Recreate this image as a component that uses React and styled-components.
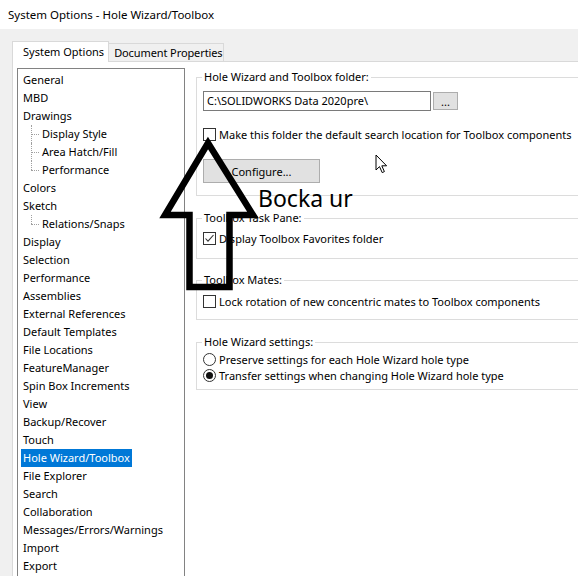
import React from 'react';
import styled, { createGlobalStyle } from 'styled-components';

const GlobalStyle = createGlobalStyle`
    html, body {
        margin: 0;
        padding: 0;
        overflow: hidden;
        background: #f0f0f0;
    }
    body {
        font-family: "Noto Sans", "Open Sans", sans-serif;
        font-size: 11px;
        color: #000000;
    }
`;

const Window = styled.div`
    position: relative;
    width: 578px;
    height: 576px;
    overflow: hidden;
    background: #f0f0f0;
    display: flex;
    flex-direction: column;
`;

const TitleBar = styled.div`
    height: 29px;
    flex: none;
    background: #ffffff;
    padding-left: 8px;
    line-height: 30px;
    font-size: 11.5px;
`;

const Body = styled.div`
    flex: 1;
    display: flex;
    flex-direction: column;
    padding: 12px 0 0 12px;
    min-height: 0;
`;

const TabStrip = styled.div`
    display: flex;
    align-items: flex-end;
    height: 20px;
    position: relative;
    z-index: 1;
`;

const Tab = styled.div`
    box-sizing: border-box;
    height: ${p => (p.$active ? '21px' : '18px')};
    margin-bottom: ${p => (p.$active ? '-1px' : '0')};
    padding: ${p => (p.$active ? '0 4px 0 10px' : '0 0 0 5px')};
    background: ${p => (p.$active ? '#ffffff' : '#f0f0f0')};
    border: 1px solid #d9d9d9;
    border-bottom: none;
    border-left: ${p => (p.$active ? '1px solid #d9d9d9' : 'none')};
    line-height: ${p => (p.$active ? '19px' : '18px')};
    letter-spacing: ${p => (p.$active ? '0' : '-0.1px')};
    white-space: nowrap;
`;

const Panel = styled.div`
    flex: 1;
    display: flex;
    background: #ffffff;
    border-top: 1px solid #d9d9d9;
    border-left: 1px solid #d9d9d9;
    padding: 6px 0 0 4px;
    min-height: 0;
`;

const Tree = styled.div`
    width: 163px;
    flex: none;
    border: 1px solid #828282;
    border-bottom: none;
    padding: 2px 0 0 3px;
    background: #ffffff;
`;

const TreeRow = styled.div`
    position: relative;
    height: 18px;
    line-height: 18px;
    padding-left: ${p => (p.$child ? '19px' : '0')};
    white-space: nowrap;

    ${p => p.$child && `
        &::before {
            content: '';
            position: absolute;
            left: 10px;
            top: 9px;
            width: 8px;
            border-top: 1px dotted #a0a0a0;
        }
        &::after {
            content: '';
            position: absolute;
            left: 10px;
            top: 0;
            height: ${p.$last ? '9px' : '18px'};
            border-left: 1px dotted #a0a0a0;
        }
    `}
`;

const TreeLabel = styled.span`
    display: inline-block;
    padding: 0 2px;
    background: ${p => (p.$selected ? '#0078d7' : 'transparent')};
    color: ${p => (p.$selected ? '#ffffff' : '#000000')};
`;

const Options = styled.div`
    margin: 1px 0 0 11px;
    width: 420px;
    flex: none;
    display: flex;
    flex-direction: column;
`;

const Group = styled.fieldset`
    margin: ${p => p.$gap || 0}px 0 0 0;
    padding: 0 0 ${p => p.$bottom}px 6px;
    border: 1px solid #dcdcdc;
    min-width: 0;
`;

const Legend = styled.legend`
    margin-left: -1px;
    padding: 0 2px;
    line-height: 16px;
    height: 16px;
`;

const FolderRow = styled.div`
    display: flex;
    align-items: center;
    margin-top: 6px;
`;

const TextField = styled.div`
    box-sizing: border-box;
    width: 228px;
    height: 20px;
    border: 1px solid #7a7a7a;
    padding-left: 3px;
    line-height: 18px;
    white-space: nowrap;
`;

const Button = styled.div`
    box-sizing: border-box;
    display: flex;
    align-items: center;
    justify-content: center;
    width: ${p => p.$w}px;
    height: ${p => p.$h}px;
    background: #e1e1e1;
    border: 1px solid #adadad;
    margin-left: ${p => p.$ml || 0}px;
    margin-top: ${p => p.$mt || 0}px;
    line-height: 1;
`;

const CheckRow = styled.div`
    display: flex;
    align-items: center;
    height: ${p => p.$h || 17}px;
    margin-top: ${p => p.$mt || 0}px;
    white-space: nowrap;
`;

const Box = styled.div`
    box-sizing: border-box;
    width: 13px;
    height: 13px;
    flex: none;
    border: 1px solid #333333;
    background: #ffffff;
    margin-right: 3px;
    display: flex;
    align-items: center;
    justify-content: center;
`;

const Radio = styled.div`
    box-sizing: border-box;
    width: 13px;
    height: 13px;
    flex: none;
    border: 1px solid #333333;
    border-radius: 50%;
    background: #ffffff;
    margin-right: 3px;
    display: flex;
    align-items: center;
    justify-content: center;

    &::after {
        content: '';
        display: ${p => (p.$on ? 'block' : 'none')};
        width: 7px;
        height: 7px;
        border-radius: 50%;
        background: #111111;
    }
`;

const Annotation = styled.svg`
    position: absolute;
    left: 0;
    top: 0;
    pointer-events: none;
`;

const Callout = styled.div`
    position: absolute;
    left: 258px;
    top: 187px;
    font-family: "Noto Sans", "Open Sans", sans-serif;
    font-size: 23px;
    line-height: 23px;
    color: #000000;
    white-space: nowrap;
`;

const Cursor = styled.svg`
    position: absolute;
    left: 375px;
    top: 154px;
    pointer-events: none;
`;

const treeItems = [
    { label: 'General' },
    { label: 'MBD' },
    { label: 'Drawings' },
    { label: 'Display Style', child: true },
    { label: 'Area Hatch/Fill', child: true },
    { label: 'Performance', child: true, last: true },
    { label: 'Colors' },
    { label: 'Sketch' },
    { label: 'Relations/Snaps', child: true, last: true },
    { label: 'Display' },
    { label: 'Selection' },
    { label: 'Performance' },
    { label: 'Assemblies' },
    { label: 'External References' },
    { label: 'Default Templates' },
    { label: 'File Locations' },
    { label: 'FeatureManager' },
    { label: 'Spin Box Increments' },
    { label: 'View' },
    { label: 'Backup/Recover' },
    { label: 'Touch' },
    { label: 'Hole Wizard/Toolbox', selected: true },
    { label: 'File Explorer' },
    { label: 'Search' },
    { label: 'Collaboration' },
    { label: 'Messages/Errors/Warnings' },
    { label: 'Import' },
    { label: 'Export' },
];

const Check = () => (
    <svg width="11" height="11" viewBox="0 0 11 11">
        <path d="M1.5 5.5 L4 8.2 L9.5 2" fill="none" stroke="#333333" strokeWidth="1.1" />
    </svg>
);

const App = () => {
    return (
        <Window>
            <GlobalStyle />
            <TitleBar>System Options - Hole Wizard/Toolbox</TitleBar>
            <Body>
                <TabStrip>
                    <Tab $active>System Options</Tab>
                    <Tab>Document Properties</Tab>
                </TabStrip>
                <Panel>
                    <Tree>
                        {treeItems.map((item, i) => (
                            <TreeRow key={i} $child={item.child} $last={item.last}>
                                <TreeLabel $selected={item.selected}>{item.label}</TreeLabel>
                            </TreeRow>
                        ))}
                    </Tree>
                    <Options>
                        <Group $bottom={12}>
                            <Legend>Hole Wizard and Toolbox folder:</Legend>
                            <FolderRow>
                                <TextField>C:\SOLIDWORKS Data 2020pre\</TextField>
                                <Button $w={25} $h={18} $ml={2}>...</Button>
                            </FolderRow>
                            <CheckRow $mt={15}>
                                <Box />
                                Make this folder the default search location for Toolbox components
                            </CheckRow>
                            <Button $w={117} $h={24} $mt={16}>Configure...</Button>
                        </Group>
                        <Group $gap={14} $bottom={11}>
                            <Legend>Toolbox Task Pane:</Legend>
                            <CheckRow $mt={4}>
                                <Box><Check /></Box>
                                Display Toolbox Favorites folder
                            </CheckRow>
                        </Group>
                        <Group $gap={13} $bottom={9}>
                            <Legend>Toolbox Mates:</Legend>
                            <CheckRow $mt={5}>
                                <Box />
                                Lock rotation of new concentric mates to Toolbox components
                            </CheckRow>
                        </Group>
                        <Group $gap={14} $bottom={6}>
                            <Legend>Hole Wizard settings:</Legend>
                            <CheckRow $mt={1} $h={16}>
                                <Radio />
                                Preserve settings for each Hole Wizard hole type
                            </CheckRow>
                            <CheckRow $h={16}>
                                <Radio $on />
                                Transfer settings when changing Hole Wizard hole type
                            </CheckRow>
                        </Group>
                    </Options>
                </Panel>
            </Body>

            <Annotation width="578" height="576" viewBox="0 0 578 576">
                <polygon
                    points="208,143 253,215 229.5,215 229.5,287 189.5,287 189.5,215 165,215"
                    fill="none"
                    stroke="#000000"
                    strokeWidth="6.5"
                    strokeLinejoin="miter"
                />
            </Annotation>
            <Callout>Bocka ur</Callout>
            <Cursor width="14" height="21" viewBox="0 0 14 21">
                <path
                    d="M1 1 L1 16 L4.5 12.6 L7.2 18.6 L9.4 17.6 L6.8 11.8 L11.6 11.8 Z"
                    fill="#ffffff"
                    stroke="#000000"
                    strokeWidth="1"
                    strokeLinejoin="round"
                />
            </Cursor>
        </Window>
    );
};

export default App;
